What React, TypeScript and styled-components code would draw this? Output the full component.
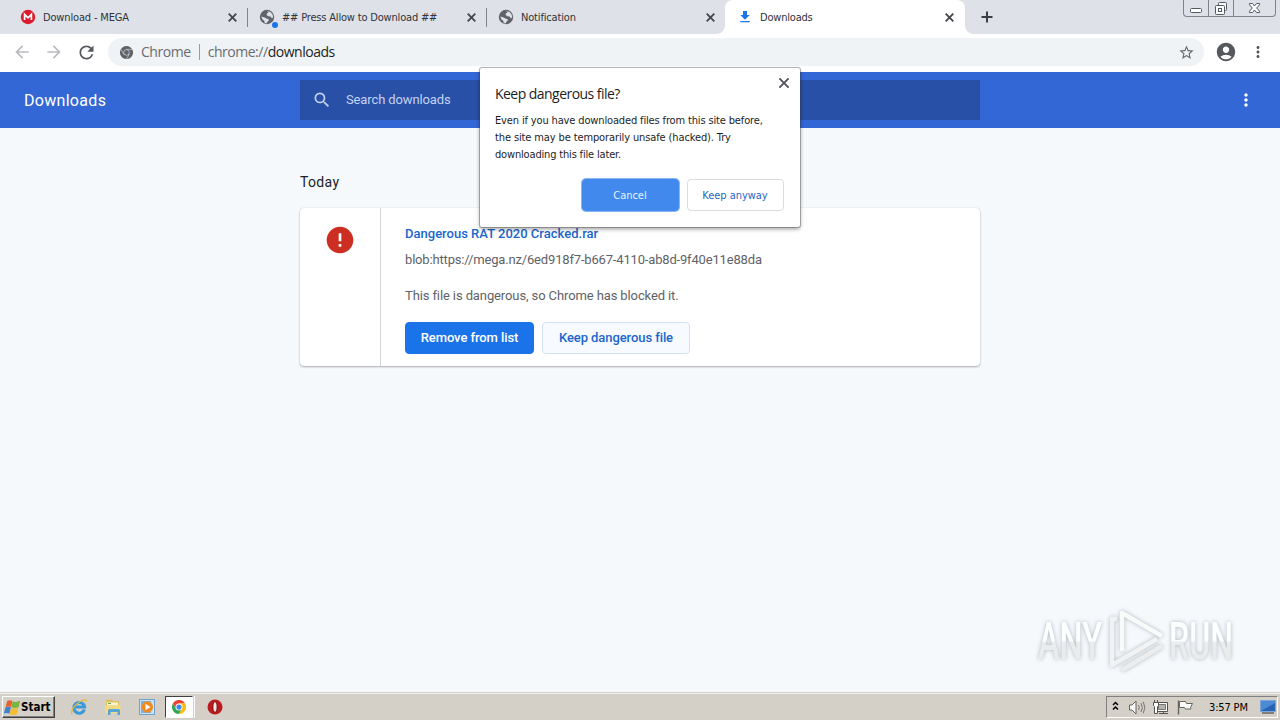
import React from 'react';
import styled, { createGlobalStyle } from 'styled-components';
import {
  MdAccountCircle, MdArrowBack, MdArrowForward, MdClose, MdError,
  MdMoreVert, MdRefresh, MdSearch, MdStarBorder, MdFileDownload,
} from 'react-icons/md';

const ui = `'DejaVu Sans Condensed', 'DejaVu Sans', sans-serif`;
const web = `Roboto, 'Liberation Sans', sans-serif`;

const Global = createGlobalStyle`
  * { box-sizing: border-box; }
  html, body { margin: 0; padding: 0; overflow: hidden; }
  svg { display: block; flex: none; }
  button { margin: 0; padding: 0; font: inherit; }
`;

const Screen = styled.div`
  position: relative;
  width: 1280px;
  height: 720px;
  display: flex;
  flex-direction: column;
  overflow: hidden;
  background: #f6f9fc;
  font-family: ${ui};
`;

/* ---------- tab strip ---------- */
const TabStrip = styled.div`
  height: 34px;
  display: flex;
  align-items: stretch;
  padding-left: 8px;
  background: #dee1e8;
`;

const Tab = styled.div<{ $w: number; $active?: boolean; $line?: boolean }>`
  position: relative;
  width: ${p => p.$w}px;
  display: flex;
  align-items: center;
  padding: 0 ${p => (p.$active ? 11 : 10)}px 0 12px;
  color: #303338;
  background: ${p => (p.$active ? '#fff' : 'transparent')};
  border-radius: 8px 8px 0 0;
  ${p => p.$line && `&::after {
    content: ''; position: absolute; right: -1px; top: 8px; width: 1px; height: 19px; background: #80848c;
  }`}
  ${p => p.$active && `&::before, &::after {
    content: ''; position: absolute; bottom: 0; width: 8px; height: 8px;
  }
  &::before { left: -8px; background: radial-gradient(circle at 0 0, transparent 7.5px, #fff 8px); }
  &::after { right: -8px; background: radial-gradient(circle at 100% 0, transparent 7.5px, #fff 8px); }`}
`;

const TabIcon = styled.span`
  position: relative;
  width: 16px;
  height: 16px;
  display: flex;
  align-items: center;
  justify-content: center;
  color: #5f6368;
`;

const Dot = styled.i`
  position: absolute;
  right: -3px;
  bottom: -3px;
  width: 6px;
  height: 6px;
  border-radius: 50%;
  background: #1a73e8;
`;

const TabTitle = styled.span<{ $ls: number }>`
  flex: 1;
  margin-left: 7px;
  padding-top: 1px;
  font-size: 11px;
  line-height: 14px;
  white-space: nowrap;
  letter-spacing: ${p => p.$ls}px;
`;

const CloseMark = styled.svg`
  width: 9px;
  height: 9px;
  stroke: #45484d;
  stroke-width: 1.9;
  fill: none;
`;

const NewTab = styled.div`
  margin-left: 13px;
  display: flex;
  align-items: center;
`;

const WindowButtons = styled.div`
  margin-left: auto;
  margin-right: 4px;
  width: 93px;
  height: 17px;
  display: flex;
  border: 1px solid #7f838b;
  border-top: 0;
  border-radius: 0 0 4px 4px;
`;

const WindowButton = styled.div<{ $w: number }>`
  width: ${p => p.$w}px;
  display: flex;
  align-items: center;
  justify-content: center;
  & + & { border-left: 1px solid #7f838b; }
`;

/* ---------- toolbar ---------- */
const Toolbar = styled.div`
  height: 38px;
  display: flex;
  align-items: center;
  padding: 0 12px 2px 12px;
  background: #fff;
  color: #55585d;
`;

const NavIcon = styled.div<{ $dim?: boolean }>`
  width: 20px;
  height: 20px;
  margin-right: 12px;
  display: flex;
  align-items: center;
  justify-content: center;
  color: ${p => (p.$dim ? '#b9bbbe' : '#55585d')};
`;

const Omnibox = styled.div`
  width: 1096px;
  height: 28px;
  display: flex;
  align-items: center;
  padding: 0 9px 0 12px;
  border-radius: 14px;
  background: #f0f3f5;
  font-family: 'Open Sans', 'Noto Sans', sans-serif;
  font-size: 14px;
  line-height: 20px;
  color: #686c71;
`;

const Scheme = styled.span`
  margin-left: 8px;
  letter-spacing: -0.45px;
`;

const Divider = styled.i`
  width: 1px;
  height: 16px;
  margin: 0 8px 0 8px;
  background: #989ca1;
`;

const Address = styled.span`
  flex: 1;
  letter-spacing: -0.47px;
  b { font-weight: 400; color: #1d1f21; }
`;

const Profile = styled.div`
  display: flex;
  align-items: center;
  gap: 12px;
  margin-left: 11px;
`;

/* ---------- downloads page ---------- */
const Header = styled.header`
  height: 56px;
  display: flex;
  align-items: center;
  padding: 0 24px;
  background: #3367d6;
  color: #fff;
  font-family: ${web};
`;

const HeaderTitle = styled.h1`
  margin: 0;
  padding-top: 2px;
  width: 276px;
  font-size: 16px;
  line-height: 24px;
  font-weight: 400;
  letter-spacing: 0.3px;
`;

const SearchField = styled.div`
  width: 680px;
  height: 40px;
  display: flex;
  align-items: center;
  padding-left: 12px;
  background: #2950a7;
  color: #c3d2f3;
  font-size: 13px;
  letter-spacing: -0.12px;
  span { margin-left: 14px; margin-top: -1px; }
`;

const MenuDots = styled.div`
  margin-left: auto;
  color: #fff;
`;

const Main = styled.main`
  flex: 1;
  width: 680px;
  margin: 0 auto;
  padding-top: 44px;
  font-family: ${web};
`;

const DateLabel = styled.h2`
  margin: 0 0 15px;
  font-size: 14px;
  line-height: 21px;
  font-weight: 400;
  letter-spacing: 0.35px;
  color: #202124;
`;

const Card = styled.section`
  height: 158px;
  display: flex;
  border-radius: 4px;
  background: #fff;
  box-shadow: 0 1px 2px rgba(60, 64, 67, .4), 0 0 1px rgba(60, 64, 67, .3);
`;

const IconColumn = styled.div`
  width: 81px;
  padding: 16px 0 0 24px;
  border-right: 1px solid #d5d7da;
  color: #cc2f21;
`;

const Details = styled.div`
  padding: 17px 0 0 24px;
  font-size: 13px;
  color: #5f6368;
  white-space: nowrap;
`;

const FileName = styled.div`
  line-height: 18px;
  font-weight: 500;
  color: #1b66cc;
  letter-spacing: 0.01px;
`;

const Source = styled.div`
  margin-top: 8px;
  line-height: 18px;
  letter-spacing: -0.17px;
`;

const Warning = styled.div`
  margin-top: 18px;
  line-height: 18px;
  letter-spacing: -0.11px;
`;

const Actions = styled.div`
  display: flex;
  gap: 8px;
  margin-top: 17px;
`;

const PageButton = styled.button<{ $w: number; $primary?: boolean }>`
  width: ${p => p.$w}px;
  height: 32px;
  padding-bottom: 2px;
  border-radius: 4px;
  border: 1px solid ${p => (p.$primary ? '#1a73e8' : '#d3e1f6')};
  background: ${p => (p.$primary ? '#1a73e8' : '#f7faff')};
  color: ${p => (p.$primary ? '#fff' : '#1b66cc')};
  font-weight: 500;
  letter-spacing: -0.08px;
`;

/* ---------- confirmation bubble ---------- */
const Bubble = styled.div`
  position: absolute;
  left: 480px;
  top: 68px;
  width: 320px;
  height: 159px;
  padding: 16px 16px 0 15px;
  border-radius: 2px;
  background: #fff;
  box-shadow: 0 0 0 1px rgba(60, 64, 67, .35), 0 2px 4px rgba(0, 0, 0, .4);
  color: #1c1d1f;
`;

const BubbleClose = styled.div`
  position: absolute;
  right: 11px;
  top: 10px;
`;

const BubbleTitle = styled.div`
  font-family: 'Open Sans', 'Noto Sans', sans-serif;
  font-size: 14px;
  line-height: 20px;
  letter-spacing: -0.54px;
`;

const BubbleText = styled.p`
  margin: 8px 0 0;
  font-size: 11px;
  line-height: 17px;
  white-space: nowrap;
`;

const Line = styled.span<{ $ls: number }>`
  display: block;
  letter-spacing: ${p => p.$ls}px;
`;

const BubbleActions = styled.div`
  display: flex;
  justify-content: flex-end;
  gap: 8px;
  margin-top: 16px;
`;

const BubbleButton = styled.button<{ $primary?: boolean }>`
  width: 97px;
  height: 32px;
  padding-right: 1px;
  border-radius: 4px;
  border: 1px solid ${p => (p.$primary ? '#4189ec' : '#dadce0')};
  background: ${p => (p.$primary ? '#4189ec' : '#fff')};
  box-shadow: ${p => (p.$primary ? '0 0 0 1px #8ab6f5' : 'none')};
  color: ${p => (p.$primary ? '#e9f1fd' : '#2468c8')};
  font-size: 11px;
  letter-spacing: -0.04px;
`;

/* ---------- watermark ---------- */
const Watermark = styled.svg`
  position: absolute;
  left: 1030px;
  top: 604px;
  filter: drop-shadow(0 0 2px rgba(90, 100, 110, .45));
`;

/* ---------- taskbar ---------- */
const Taskbar = styled.footer`
  height: 28px;
  display: flex;
  align-items: center;
  padding: 1px 2px 0 1px;
  background: #d4d0c8;
  border-top: 1px solid #d4d0c8;
  box-shadow: inset 0 1px 0 #f3f2ee;
`;

const StartButton = styled.div`
  width: 53px;
  height: 22px;
  display: flex;
  align-items: center;
  margin-left: 1px;
  padding-left: 1px;
  gap: 0;
  border: 1px solid;
  border-color: #fff #404040 #404040 #fff;
  box-shadow: inset -1px -1px 0 #808080;
  color: #000;
  font-size: 11.5px;
  font-weight: 700;
  letter-spacing: 0;
`;

const QuickLaunch = styled.div`
  display: flex;
  align-items: center;
  margin-left: 15px;
`;

const Launcher = styled.div<{ $w: number }>`
  width: ${p => p.$w}px;
  height: 22px;
  display: flex;
  align-items: center;
  justify-content: center;
`;

const ActiveLauncher = styled(Launcher)`
  background: #fff;
  border: 1px solid;
  border-color: #404040 #fff #fff #404040;
  box-shadow: 1px 0 0 #d4d0c8, 2px 0 0 #fff;
`;

const Tray = styled.div`
  margin-left: auto;
  width: 172px;
  height: 22px;
  display: flex;
  align-items: center;
  padding-left: 4px;
  border: 1px solid;
  border-color: #808080 #fff #fff #808080;
`;

const Clock = styled.span`
  width: 40px;
  margin-left: 16px;
  font-size: 11px;
  letter-spacing: -0.15px;
  white-space: nowrap;
  color: #000;
`;

const ShowDesktop = styled.div`
  margin-left: auto;
  margin-right: 1px;
`;

const Cross = () => (
  <CloseMark viewBox="0 0 9 9"><path d="M.7.7l7.6 7.6M8.3.7L.7 8.3" /></CloseMark>
);

const MegaLogo = () => (
  <svg width="16" height="16" viewBox="0 0 16 16">
    <circle cx="8" cy="8" r="7.2" fill="#dc1a2c" />
    <path d="M4.6 11V5.4L8 8.8l3.4-3.4V11" fill="none" stroke="#fff" strokeWidth="1.7" />
  </svg>
);

const Globe = () => (
  <svg width="16" height="16" viewBox="0 0 16 16">
    <circle cx="8" cy="8" r="7.200" fill="#5f6368" />
    <path d="M8.200 2.300l3 .4 2.300 2.500.7 2.800-1.200 1.400-1.500-1.900-2.300-.2-1.700-1.500.5-1.500 1.600-.5zM2.200 7.400l3.600 1 1.600 1.200 1.900.3.700 1.400-1.800 1.700-.6 1.400-2-.6-.2-1.700-1.800-1.500z" fill="#dee1e8" />
  </svg>
);

const ChromeGlyph = ({ size, color }: { size: number; color?: boolean }) => {
  const c = color ? ['#e94335', '#2fa751', '#fbbd06', '#4285f4'] : ['#5f6368', '#5f6368', '#5f6368', '#5f6368'];
  const gap = color ? '#fff' : '#d5d8da';
  return (
    <svg width={size} height={size} viewBox="0 0 24 24">
      <path d="M1.6 6A12 12 0 0 1 22.4 6H12L6.8 15z" fill={c[0]} />
      <path d="M1.6 6A12 12 0 0 0 12 24l5.2-9H6.8z" fill={c[1]} />
      <path d="M22.4 6A12 12 0 0 1 12 24l5.2-9L12 6z" fill={c[2]} />
      {!color && <path d="M12 6.2h11M6.8 15L1.8 6.4M17.2 15l-5 8.8" stroke={gap} strokeWidth="1" />}
      <circle cx="12" cy="12" r={color ? 6 : 5.6} fill={gap} />
      <circle cx="12" cy="12" r="4.5" fill={c[3]} />
    </svg>
  );
};

const WindowsFlag = () => (
  <svg width="17" height="17" viewBox="0 0 16 16">
    <path d="M3 1.800c2-1 3.400-.9 5 .1L6.700 7.800c-1.600-1-3.200-1-5.200-.2z" fill="#e8612c" />
    <path d="M8.300 2.100c1.700.9 3.900.9 6.900-.4l-1.500 6.100c-2.500 1-4.800 1-6.700 0z" fill="#7bb441" />
    <path d="M1.300 7.900c1.900-.9 3.600-.8 5.200.1l-1.400 5.800c-1.600-.9-3.200-.9-5.200-.1z" fill="#3f83cf" />
    <path d="M6.800 8.300c1.800.9 4.100.9 6.700 0l-1.400 6c-2.500 1-4.700.9-6.700 0z" fill="#f4bd31" />
  </svg>
);

const ExplorerE = () => (
  <svg width="18" height="18" viewBox="0 0 18 18" fill="none">
    <path d="M14.400 11.500a5.400 5.400 0 1 1 .2-2.500H4.500" stroke="#3a9ad9" strokeWidth="3" />
    <path d="M2.200 16C-.2 13.500 5 6 11 3c3-1.500 6-2 5.300.8" stroke="#e8b93a" strokeWidth="1.300" />
  </svg>
);

const Folder = () => (
  <svg width="18" height="18" viewBox="0 0 18 18">
    <path d="M2 3l1-1.500h5L9 3h6v11H2z" fill="#dfc163" />
    <path d="M3 4.500h11v3H3z" fill="#fff6cf" />
    <path d="M4 5h3v1H4z" fill="#58a55c" />
    <path d="M1 7.500h15.500v7.500H1z" fill="#f3da83" />
    <path d="M4 17v-4.500q0-1.500 1.500-1.500h9q1.500 0 1.500 1.500V17h-2.500v-3h-7v3z" fill="#58a4d3" />
  </svg>
);

const MediaPlayer = () => (
  <svg width="18" height="18" viewBox="0 0 18 18">
    <rect x="1.500" y="1.500" width="15" height="15" fill="#c9e1f4" stroke="#6fa3cf" />
    <rect x="3" y="3" width="10" height="12" fill="#7db2de" />
    <circle cx="9.300" cy="9" r="5.700" fill="#f08a1d" />
    <path d="M7.500 5.800l5 3.200-5 3.200z" fill="#fff" />
  </svg>
);

const OperaLogo = () => (
  <svg width="16" height="16" viewBox="0 0 16 16">
    <circle cx="8" cy="8" r="7.500" fill="#bb1a1f" />
    <ellipse cx="8" cy="8" rx="2.600" ry="5.500" fill="#7d1013" />
    <ellipse cx="8" cy="8" rx="1.600" ry="4.800" fill="#f1e6e4" />
  </svg>
);

const TrayIcons = () => (
  <svg width="82" height="18" viewBox="0 0 82 18" fill="none">
    <path d="M2 7l2.500-2.500L7 7M2 11.500L4.500 9 7 11.500" stroke="#000" strokeWidth="1.500" />
    <path d="M18.500 7h2.500l4-4v13l-4-4h-2.500z" fill="#f7f7f5" stroke="#66645f" />
    <path d="M27.500 7q1.500 2.500 0 5M30 5q2.800 4.500 0 9M32.300 3.800q3 5.700 0 11.400" stroke="#77746f" />
    <path d="M45.500 4.500h11v9h-11z" fill="#fff" stroke="#55534f" />
    <path d="M47.500 6.500h7v5h-7z" fill="#b6b4ae" stroke="#77746f" />
    <path d="M48 15.500h9M52.500 13.500v2" stroke="#55534f" />
    <path d="M42.500 4.500h5v3l-1 1v7h-3v-7l-1-1z" fill="#fff" stroke="#55534f" />
    <path d="M43.500 2v2.500M46.500 2v2.500" stroke="#55534f" />
    <path d="M67.500 2.500v14" stroke="#66645f" strokeWidth="1.400" />
    <path d="M68.500 3.500h6l1 2h6l-2 4 .5 1.500h-5.500l-1-1.500h-5z" fill="#fafaf8" stroke="#66645f" />
  </svg>
);

export default function App() {
  return (
    <Screen>
      <Global />
      <TabStrip>
        <Tab $w={239} $line>
          <TabIcon><MegaLogo /></TabIcon>
          <TabTitle $ls={-0.16}>Download - MEGA</TabTitle>
          <Cross />
        </Tab>
        <Tab $w={239} $line>
          <TabIcon><Globe /><Dot /></TabIcon>
          <TabTitle $ls={-0.18}>## Press Allow to Download ##</TabTitle>
          <Cross />
        </Tab>
        <Tab $w={239}>
          <TabIcon><Globe /></TabIcon>
          <TabTitle $ls={-0.17}>Notification</TabTitle>
          <Cross />
        </Tab>
        <Tab $w={240} $active>
          <TabIcon><MdFileDownload size={16} color="#1a73e8" /></TabIcon>
          <TabTitle $ls={-0.2}>Downloads</TabTitle>
          <Cross />
        </Tab>
        <NewTab>
          <svg width="18" height="18"><path d="M9 3.500v11M3.500 9h11" stroke="#3b3e43" strokeWidth="2" /></svg>
        </NewTab>
        <WindowButtons>
          <WindowButton $w={25}>
            <svg width="13" height="16"><rect x=".5" y="8.500" width="11" height="4" rx="1" fill="#fff" stroke="#55585e" /></svg>
          </WindowButton>
          <WindowButton $w={25}>
            <svg width="14" height="16" fill="#f8f9fa" stroke="#55585e"><rect x="4.500" y="2.500" width="8" height="8" rx="1" /><rect x="1.500" y="5.500" width="9" height="9" rx="1" /><rect x="4.500" y="8.500" width="3" height="3" /></svg>
          </WindowButton>
          <WindowButton $w={43}>
            <svg width="13" height="16"><path d="M1.500 3.500h3l2 2.500 2-2.500h3v1.300L8.700 8l2.800 3.200v1.300h-3l-2-2.500-2 2.500h-3v-1.300L4.300 8 1.500 4.800z" fill="#fff" stroke="#55585e" /></svg>
          </WindowButton>
        </WindowButtons>
      </TabStrip>

      <Toolbar>
        <NavIcon $dim><MdArrowBack size={20} /></NavIcon>
        <NavIcon $dim><MdArrowForward size={20} /></NavIcon>
        <NavIcon><MdRefresh size={21} /></NavIcon>
        <Omnibox>
          <ChromeGlyph size={13} />
          <Scheme>Chrome</Scheme>
          <Divider />
          <Address>chrome://<b>downloads</b></Address>
          <MdStarBorder size={17} />
        </Omnibox>
        <Profile>
          <MdAccountCircle size={22} />
          <MdMoreVert size={18} />
        </Profile>
      </Toolbar>

      <Header>
        <HeaderTitle>Downloads</HeaderTitle>
        <SearchField><MdSearch size={20} /><span>Search downloads</span></SearchField>
        <MenuDots><MdMoreVert size={20} /></MenuDots>
      </Header>

      <Main>
        <DateLabel>Today</DateLabel>
        <Card>
          <IconColumn><MdError size={32} /></IconColumn>
          <Details>
            <FileName>Dangerous RAT 2020 Cracked.rar</FileName>
            <Source>blob:https://mega.nz/6ed918f7-b667-4110-ab8d-9f40e11e88da</Source>
            <Warning>This file is dangerous, so Chrome has blocked it.</Warning>
            <Actions>
              <PageButton $w={129} $primary>Remove from list</PageButton>
              <PageButton $w={148}>Keep dangerous file</PageButton>
            </Actions>
          </Details>
        </Card>
      </Main>

      <Bubble>
        <BubbleClose><MdClose size={10} viewBox="5 5 14 14" color="#55585d" stroke="#55585d" strokeWidth=".8" /></BubbleClose>
        <BubbleTitle>Keep dangerous file?</BubbleTitle>
        <BubbleText>
          <Line $ls={-0.145}>Even if you have downloaded files from this site before,</Line>
          <Line $ls={-0.12}>the site may be temporarily unsafe (hacked). Try</Line>
          <Line $ls={-0.17}>downloading this file later.</Line>
        </BubbleText>
        <BubbleActions>
          <BubbleButton $primary>Cancel</BubbleButton>
          <BubbleButton>Keep anyway</BubbleButton>
        </BubbleActions>
      </Bubble>

      <Watermark width="250" height="80" viewBox="0 0 250 80">
        <defs>
          <linearGradient id="fade" x1="0" y1="0" x2="0" y2="1">
            <stop offset=".48" stopColor="#fdfefe" />
            <stop offset=".52" stopColor="#eaebec" />
          </linearGradient>
        </defs>
        <g fontFamily="Roboto, sans-serif" fontWeight="500" fontSize="51" fill="url(#fade)">
          <text x="8" y="55" textLength="64" lengthAdjust="spacingAndGlyphs">ANY</text>
          <text x="139" y="55" textLength="64" lengthAdjust="spacingAndGlyphs">RUN</text>
        </g>
        <g fill="none" stroke="#f9fafa" strokeWidth="4.500" strokeLinejoin="round">
          <path d="M92 66l40-24" stroke="#ecedee" />
          <path d="M87 15h-5v46l45-26" stroke="#f1f2f3" />
          <path d="M92 47V9l40 23" />
        </g>
      </Watermark>

      <Taskbar>
        <StartButton><WindowsFlag />Start</StartButton>
        <QuickLaunch>
          <Launcher $w={18}><ExplorerE /></Launcher>
          <Launcher $w={50}><Folder /></Launcher>
          <Launcher $w={18}><MediaPlayer /></Launcher>
          <Launcher $w={9} />
          <ActiveLauncher $w={28}><ChromeGlyph size={14} color /></ActiveLauncher>
          <Launcher $w={43}><OperaLogo /></Launcher>
        </QuickLaunch>
        <Tray>
          <TrayIcons />
          <Clock>3:57 PM</Clock>
          <ShowDesktop>
            <svg width="16" height="14"><rect x=".5" y=".5" width="15" height="11" fill="#2864b4" stroke="#7ca6d8" /><path d="M1 11L15 3V1H1z" fill="#4a8bd4" /><path d="M2 13h12" stroke="#333" /></svg>
          </ShowDesktop>
        </Tray>
      </Taskbar>
    </Screen>
  );
}
